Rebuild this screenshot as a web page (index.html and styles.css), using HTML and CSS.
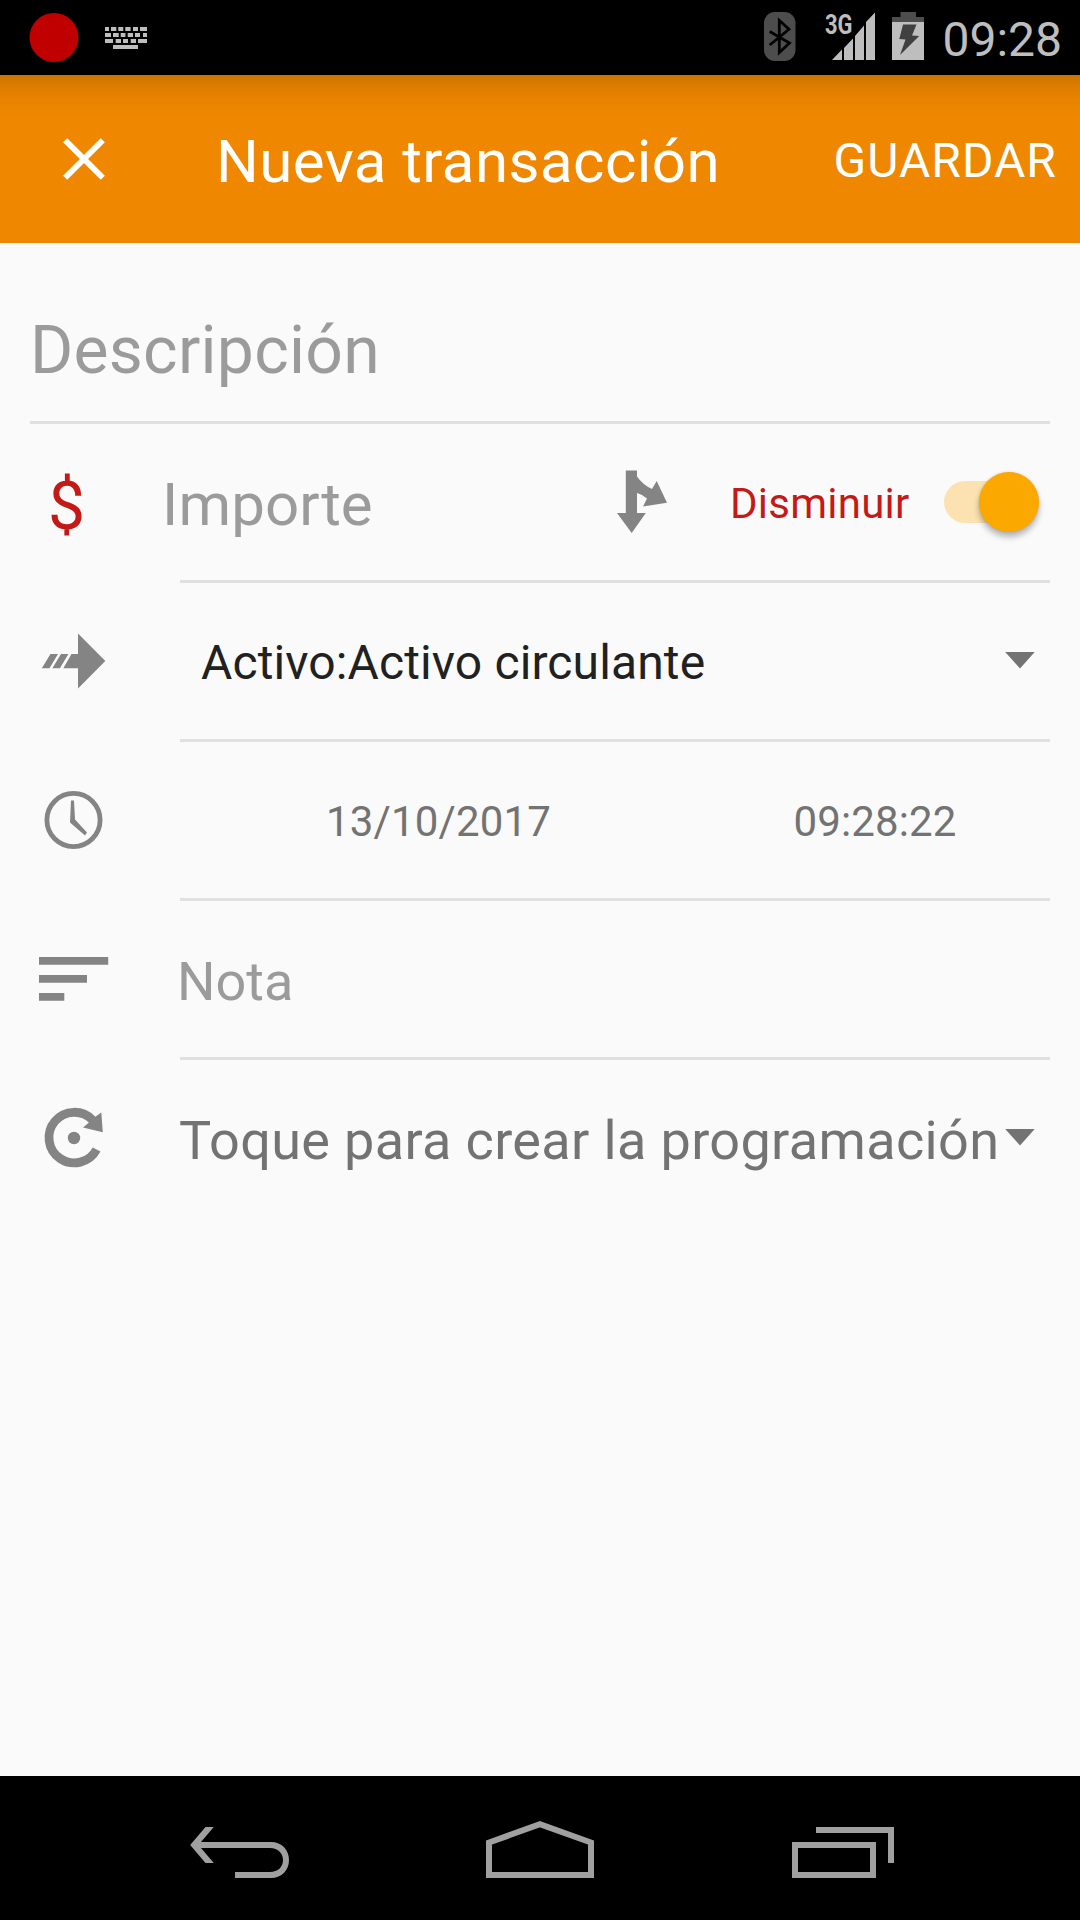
FILE: index.html
```html
<!DOCTYPE html>
<html lang="es">
<head>
<meta charset="utf-8">
<title>Nueva transacción</title>
<link rel="stylesheet" href="styles.css">
</head>
<body>
<div class="screen">
  <header class="status">
    <svg class="status-left" width="180" height="75" viewBox="0 0 180 75">
      <circle cx="54" cy="37.5" r="24.5" fill="#c00000"/>
      <path fill="#bebebe" d="M105 27h4v4h-4zm6 0h5.300v4h-5.300zm7.300 0h5v4h-5zm7 0h5.300v4h-5.300zm7.700 0h5v4h-5zm7 0h7v4h-7zM105 33h6v4h-6zm8 0h5.700v4h-5.700zm7.700 0h4.700v4h-4.700zm7 0h5.300v4h-5.300zm7.300 0h5v4h-5zm8 0h4v4h-4zM105 39h8v4h-8zm10.700 0h5.300v4h-5.300zm7.300 0h5v4h-5zm7.700 0h5.300v4h-5.300zm7.300 0h9v4h-9zM113 45h25v4h-25z"/>
    </svg>
    <svg class="status-right" width="180" height="75" viewBox="760 0 180 75">
      <rect x="764" y="12" width="31.500" height="49" rx="11" fill="#4d4d4d"/>
      <path d="M769.700 31.500L789.500 43 779.300 52.500V20.500L789 29.300 769.700 45" fill="none" stroke="#000" stroke-width="2.800"/>
      <text class="network" x="825" y="33.700" textLength="27.500" lengthAdjust="spacingAndGlyphs">3G</text>
      <path fill="#bebebe" d="M832 60l10-10.500V60zM844 60V48l9-9.500V60zM855 60V36l9-10.500V60zM866 60V22l9-9.500V60z"/>
      <path fill="#4d4d4d" d="M892 17h8.500v-5h15.500v5h8v5h-32z"/>
      <path fill="#bebebe" d="M892 22h32v38h-32z"/>
      <path fill="#404040" d="M903 24.500h13.500L912 35.500l7.200.5L900 55l5.500-15.500-6.200-.5z"/>
    </svg>
    <span class="clock">09:28</span>
  </header>

  <div class="appbar">
    <svg class="close" width="217" height="168" viewBox="0 75 217 168">
      <path d="M65.200 140.200l37.600 37.600M102.800 140.200l-37.600 37.600" stroke="#fff" stroke-width="5.800"/>
    </svg>
    <h1 class="title">Nueva transacción</h1>
    <span class="save">GUARDAR</span>
  </div>

  <main class="form">
    <div class="description"><span>Descripción</span></div>

    <div class="row">
      <div class="currency"><span>$</span></div>
      <div class="field amount">
        <span class="amount-hint">Importe</span>
        <svg class="split" width="50" height="70" viewBox="617 467 50 70">
          <path fill="#848484" d="M625.800 470.500H637v6q5.500 8 15 12.500l4.700-8L667 502.700 643 506.500l4-8q-5-4.500-10-5.500V513h8.800L631.700 533 617 513h8.800z"/>
        </svg>
        <span class="type">Disminuir</span>
        <span class="switch"><span class="thumb"></span></span>
      </div>
    </div>

    <div class="row">
      <svg class="icon" width="180" height="156" viewBox="0 583 180 156">
        <path fill="#848484" d="M41.800 668.300l8.700-14.300H58l-8.500 14.300zM52.300 668.300L61 654h7.400l-8.500 14.300zM63.300 668.300L71.500 654H78v-20.500L105.300 661 78 688.500v-20.200z"/>
      </svg>
      <div class="field account">
        <span>Activo:Activo circulante</span>
        <svg class="caret" width="30" height="17" viewBox="0 0 30 17"><path fill="#737373" d="M.200 0h29.500L15 16.500z"/></svg>
      </div>
    </div>

    <div class="row">
      <svg class="icon" width="180" height="156" viewBox="0 742 180 156">
        <circle cx="73.500" cy="820" r="26.600" fill="none" stroke="#848484" stroke-width="4.800"/>
        <path fill="#848484" d="M71 800.500h3l1 19L87 832.500l-2 3L70 822.500z"/>
      </svg>
      <div class="field datetime">
        <span class="date">13/10/2017</span>
        <span class="time">09:28:22</span>
      </div>
    </div>

    <div class="row">
      <svg class="icon" width="180" height="156" viewBox="0 901 180 156">
        <path fill="#848484" d="M39 957h69.200v7.700H39zM39 975h48v7.700H39zM39 993h25.300v7.800H39z"/>
      </svg>
      <div class="field note"><span>Nota</span></div>
    </div>

    <div class="row last">
      <svg class="icon" width="180" height="156" viewBox="0 1060 180 156">
        <path d="M96.600 1149.500A25.300 25.300 0 1 1 92.500 1120" fill="none" stroke="#848484" stroke-width="8.800"/>
        <path fill="#848484" d="M101.300 1112.500l1.500 19.700L83 1127.500l6-5 6.700-6z"/>
        <circle cx="74" cy="1138" r="6.200" fill="#848484"/>
      </svg>
      <div class="field schedule">
        <span>Toque para crear la programación</span>
        <svg class="caret" width="30" height="17" viewBox="0 0 30 17"><path fill="#737373" d="M.200 0h29.500L15 16.500z"/></svg>
      </div>
    </div>
  </main>

  <nav class="navbar">
    <svg width="104" height="64" viewBox="188 1818 104 64">
      <path fill="#a0a0a0" d="M190.200 1845l15.300-18h8.300L201 1842h70c11 0 18 8 18 18s-7 18-18 18h-36v-6h35c8 0 13-5 13-12s-5-12-13-12h-69l12.800 15h-8.300z"/>
    </svg>
    <svg class="home" width="108" height="64" viewBox="486 1818 108 64">
      <path fill="none" stroke="#a0a0a0" stroke-width="6" d="M489 1875v-32.500l50.900-18.300L591 1842.500V1875z"/>
    </svg>
    <svg width="104" height="64" viewBox="791 1818 104 64">
      <path fill="none" stroke="#a0a0a0" stroke-width="6" d="M795 1845h78v30h-78zM816 1830h75v33"/>
    </svg>
  </nav>
</div>
</body>
</html>
```
FILE: styles.css
```css
* { box-sizing: border-box; }
body { margin: 0; background: #fafafa; font-family: Roboto, sans-serif; }
svg { display: block; flex: none; }
.screen { width: 1080px; height: 1920px; display: flex; flex-direction: column; overflow: hidden; }

.status { height: 75px; background: #000; display: flex; align-items: center; padding-right: 18px; flex: none; }
.status-right { margin-left: auto; }
.network { font-size: 27px; font-weight: 700; fill: #bebebe; }
.clock { width: 122px; text-align: right; font-size: 48px; color: #bebebe; padding-top: 4px; white-space: nowrap; }

.appbar {
  height: 168px; flex: none; display: flex; align-items: center; color: #fff; padding-right: 23px;
  background: linear-gradient(#cc7300, #dc7c00 10px, #e98300 25px, #ef8700 42px);
}
.title { margin: 0 0 0 -1px; font-size: 60px; font-weight: 400; letter-spacing: .45px; padding-top: 4px; white-space: nowrap; }
.save { margin-left: auto; font-size: 48px; letter-spacing: 1.05px; padding-top: 2px; }

.form { flex: 1; }
.description {
  height: 181px; margin: 0 30px; padding: 37px 0 0; border-bottom: 3px solid #e0e0e0;
  display: flex; align-items: center; font-size: 66px; letter-spacing: .25px; color: #9b9b9b;
}
.row { height: 159px; display: flex; padding-right: 30px; }
.field { flex: 1; height: 159px; border-bottom: 3px solid #e0e0e0; display: flex; align-items: center; white-space: nowrap; }
.field > span { padding-top: 4px; }
.last .field { border-bottom-color: transparent; }
.currency { width: 180px; height: 156px; padding: 8px 0 0 48px; display: flex; align-items: center; font-size: 66px; color: #c31a18; }
.amount-hint { margin-left: -18px; width: 455px; font-size: 60px; letter-spacing: .1px; color: #9b9b9b; }
.split { margin-right: 63px; }
.field > .type { width: 214px; padding-top: 2px; font-size: 42px; letter-spacing: .25px; color: #c31a18; }
.field > .switch { width: 86px; height: 42px; padding: 0; border-radius: 21px; background: #fce2b0; display: flex; align-items: center; justify-content: flex-end; }
.thumb { width: 60px; height: 60px; margin: -1px -9px 0 0; flex: none; border-radius: 50%; background: #fba800; box-shadow: 0 5px 6px rgba(0, 0, 0, .28), 0 0 3px rgba(0, 0, 0, .12); }
.caret { margin: -1px 15px 0 auto; }
.account { padding-left: 21px; font-size: 48px; letter-spacing: .12px; color: #212121; }
.account > span, .datetime > span { padding-top: 2px; }
.datetime { font-size: 42px; letter-spacing: .15px; color: #737373; display: grid; grid-template-columns: 517px 353px; text-align: center; }
.datetime > .time { padding-left: 3px; }
.note { font-size: 54px; color: #9b9b9b; }
.note > span { margin-left: -3px; }
.schedule { font-size: 54px; letter-spacing: .36px; color: #737373; }
.schedule > span { margin-left: -1px; }

.navbar { height: 144px; flex: none; background: #000; display: flex; align-items: center; padding: 4px 0 0 188px; }
.home { margin: 0 197px 0 194px; }
```
